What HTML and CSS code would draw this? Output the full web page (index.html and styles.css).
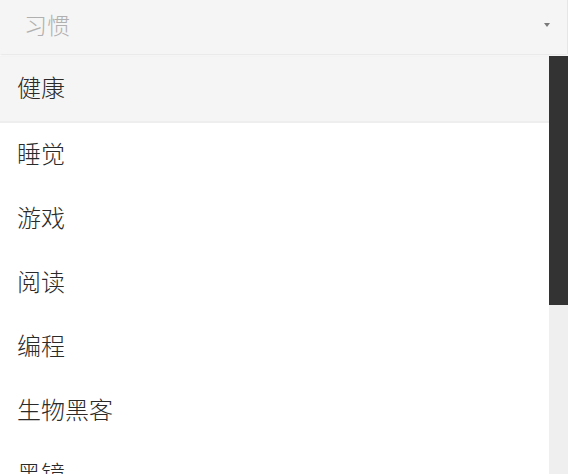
FILE: index.html
```html
<!DOCTYPE html>
<html lang="zh">
<head>
<meta charset="utf-8">
<link rel="stylesheet" href="styles.css">
</head>
<body>
<div class="select">
  <div class="select-head">
    <span class="placeholder">习惯</span>
    <span class="caret"></span>
  </div>
  <div class="menu">
    <div class="list">
      <div class="item active">健康</div>
      <div class="item">睡觉</div>
      <div class="item">游戏</div>
      <div class="item">阅读</div>
      <div class="item">编程</div>
      <div class="item">生物黑客</div>
      <div class="item">黑镜</div>
    </div>
    <div class="scrollbar"><div class="thumb"></div></div>
  </div>
</div>
</body>
</html>
```
FILE: styles.css
```css
html, body {
  margin: 0;
  padding: 0;
  background: #fff;
  font-family: "Noto Sans CJK SC", "Noto Sans", sans-serif;
}
.select {
  width: 568px;
  height: 474px;
  display: flex;
  flex-direction: column;
  overflow: hidden;
}
.select-head {
  height: 54px;
  flex: none;
  background: #f5f5f5;
  box-shadow: 0 1px 2px rgba(0,0,0,0.12);
  border-right: 1px solid #e6e6e6;
  display: flex;
  align-items: center;
  justify-content: space-between;
  padding: 0 17px 0 24px;
  position: relative;
  z-index: 1;
}
.placeholder {
  font-size: 23px;
  color: #b0b0b0;
  font-weight: 300;
  line-height: 1;
  margin-top: -5px;
}
.caret {
  width: 0;
  height: 0;
  border-left: 3.5px solid transparent;
  border-right: 3.5px solid transparent;
  border-top: 4px solid #7a7a7a;
  margin-top: -4px;
}
.menu {
  margin-top: 2px;
  flex: 1;
  display: flex;
  min-height: 0;
}
.list {
  flex: 1;
  overflow: hidden;
}
.scrollbar {
  width: 19px;
  flex: none;
  background: #efefef;
}
.thumb {
  height: 249px;
  background: #333333;
}
.item {
  box-sizing: border-box;
  height: 64px;
  display: flex;
  align-items: center;
  padding-left: 17px;
  padding-bottom: 5px;
  font-size: 24px;
  line-height: 1;
  color: #2a2a2a;
  font-weight: 300;
}
.item.active {
  height: 67px;
  padding-bottom: 3px;
  background: #f5f5f5;
  border-bottom: 2px solid #eeeeee;
}
```
